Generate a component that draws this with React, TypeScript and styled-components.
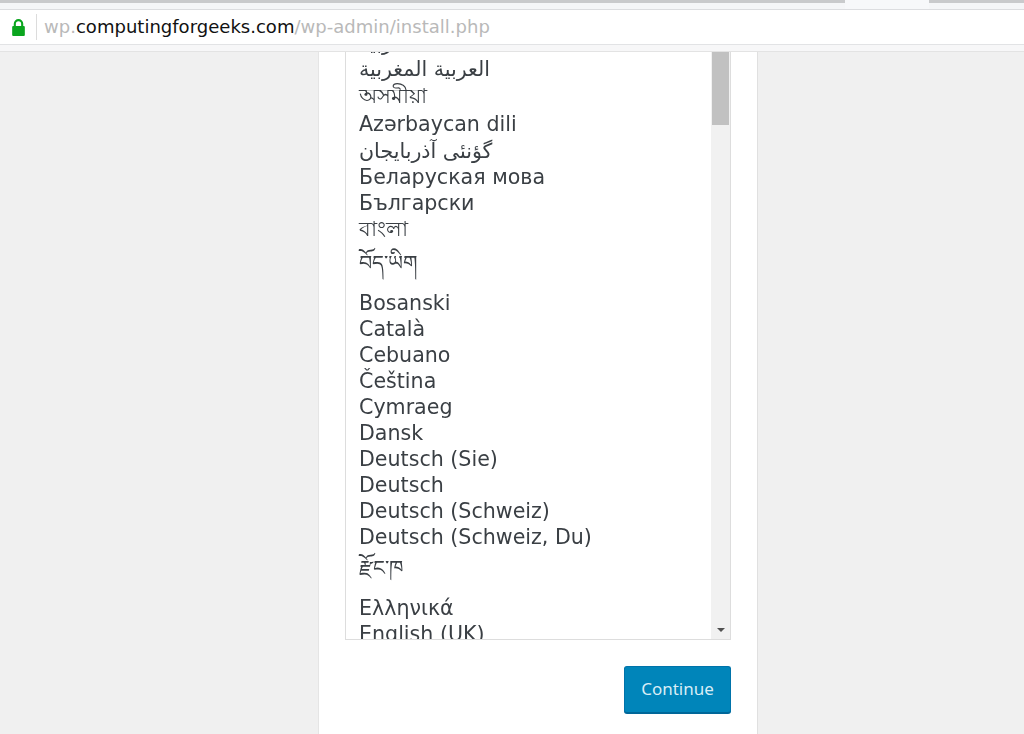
import React from "react"
import styled, { createGlobalStyle } from "styled-components"

const languages: { label: string; height?: number; line?: number }[] = [
  { label: "العربية" },
  { label: "العربية المغربية" },
  { label: "অসমীয়া", height: 28 },
  { label: "Azərbaycan dili", height: 28 },
  { label: "گؤنئی آذربایجان", height: 26 },
  { label: "Беларуская мова" },
  { label: "Български" },
  { label: "বাংলা" },
  { label: "བོད་ཡིག", height: 48, line: 42 },
  { label: "Bosanski" },
  { label: "Català" },
  { label: "Cebuano" },
  { label: "Čeština" },
  { label: "Cymraeg" },
  { label: "Dansk" },
  { label: "Deutsch (Sie)" },
  { label: "Deutsch" },
  { label: "Deutsch (Schweiz)" },
  { label: "Deutsch (Schweiz, Du)" },
  { label: "རྫོང་ཁ", height: 45, line: 36 },
  { label: "Ελληνικά" },
  { label: "English (UK)" },
]

export default function App() {
  return <Page>
    <GlobalStyle/>
    <Chrome>
      <TabStrip>
        <ActiveTab/>
      </TabStrip>
      <AddressBar>
        <LockIcon viewBox="0 0 14 18">
          <path d="M3.5 8V5.5a3.5 3.5 0 0 1 7 0V8" fill="none" stroke="#0aa51e" strokeWidth="2"/>
          <rect x="1" y="7.5" width="12" height="9.5" rx="1" fill="#0aa51e"/>
        </LockIcon>
        <Divider/>
        <Url>
          wp.<Host>computingforgeeks.com</Host>/wp-admin/install.php
        </Url>
      </AddressBar>
      <ChromeShadow/>
    </Chrome>
    <Content>
      <Card>
        <ListBox>
          <Options>
            {languages.map(l => <Option key={l.label} $height={l.height} $line={l.line}>{l.label}</Option>)}
          </Options>
          <ScrollTrack>
            <ScrollThumb/>
            <ScrollArrow/>
          </ScrollTrack>
        </ListBox>
        <Actions>
          <Button>Continue</Button>
        </Actions>
      </Card>
    </Content>
  </Page>
}

const GlobalStyle = createGlobalStyle`
  html, body {
    margin: 0;
    padding: 0;
    background: #f0f0f0;
  }
`;

const Page = styled.div`
  display: flex;
  flex-direction: column;
  height: 734px;
  overflow: hidden;
  font-family: "DejaVu Sans", "Noto Sans", sans-serif;
`;

const Chrome = styled.header`
  flex: 0 0 auto;
  display: flex;
  flex-direction: column;
`;

const TabStrip = styled.div`
  display: flex;
  justify-content: flex-end;
  height: 9px;
  background: linear-gradient(#c9cacc 0 3px, #f5f6f8 3px);
  border-bottom: 1px solid #dcdde0;
  padding-right: 95px;
`;

const ActiveTab = styled.div`
  width: 84px;
  background: #f7f8fa;
`;

const AddressBar = styled.div`
  display: flex;
  align-items: center;
  height: 34px;
  background: #fff;
  border-bottom: 1px solid #e2e3e5;
  padding-left: 11px;
`;

const LockIcon = styled.svg`
  width: 15px;
  height: 19px;
`;

const Divider = styled.div`
  width: 1px;
  height: 26px;
  background: #dcdcdc;
  margin-left: 10px;
  margin-right: 7px;
`;

const Url = styled.div`
  font-size: 18.04px;
  color: #b9b9b9;
  white-space: nowrap;
  padding-bottom: 2px;
`;

const Host = styled.span`
  color: #111;
`;

const ChromeShadow = styled.div`
  height: 6px;
  background: #f7f7f8;
  border-bottom: 1px solid #e3e3e3;
`;

const Content = styled.main`
  flex: 1;
  min-height: 0;
  display: flex;
  padding-left: 318px;
`;

const Card = styled.section`
  width: 440px;
  box-sizing: border-box;
  background: #fff;
  border-left: 1px solid #e5e5e5;
  border-right: 1px solid #e0e0e0;
  padding: 0 26px;
  display: flex;
  flex-direction: column;
`;

const ListBox = styled.div`
  display: flex;
  height: 588px;
  box-sizing: border-box;
  background: #fff;
  border-left: 1px solid #ddd;
  border-right: 1px solid #ddd;
  border-bottom: 1px solid #ddd;
`;

const Options = styled.div`
  flex: 1;
  min-width: 0;
  overflow: hidden;
  padding-left: 13px;
  font-size: 20.6px;
  color: #3a3f44;
  will-change: transform;
`;

const Option = styled.div<{ $height?: number; $line?: number }>`
  height: ${p => p.$height ?? 26}px;
  line-height: ${p => p.$line ?? p.$height ?? 26}px;
  white-space: nowrap;

  &:first-child {
    margin-top: -22px;
  }
`;

const ScrollTrack = styled.div`
  flex: 0 0 19px;
  display: flex;
  flex-direction: column;
  background: #f1f1f1;
`;

const ScrollThumb = styled.div`
  height: 73px;
  margin: 0 1px 0 1px;
  background: #c1c1c1;
`;

const ScrollArrow = styled.div`
  margin: auto auto 7px;
  width: 0;
  height: 0;
  border-left: 4px solid transparent;
  border-right: 4px solid transparent;
  border-top: 4px solid #505050;
`;

const Actions = styled.div`
  display: flex;
  justify-content: flex-end;
  padding-top: 26px;
`;

const Button = styled.button`
  width: 107px;
  height: 47px;
  padding: 0 0 2px;
  background: #0085ba;
  border: 1px solid #0073aa;
  border-bottom-color: #006799;
  border-radius: 3px;
  box-shadow: 0 1px 0 #006799;
  color: #d9edf6;
  font-family: "Noto Sans", "Open Sans", sans-serif;
  font-size: 17px;
`;
